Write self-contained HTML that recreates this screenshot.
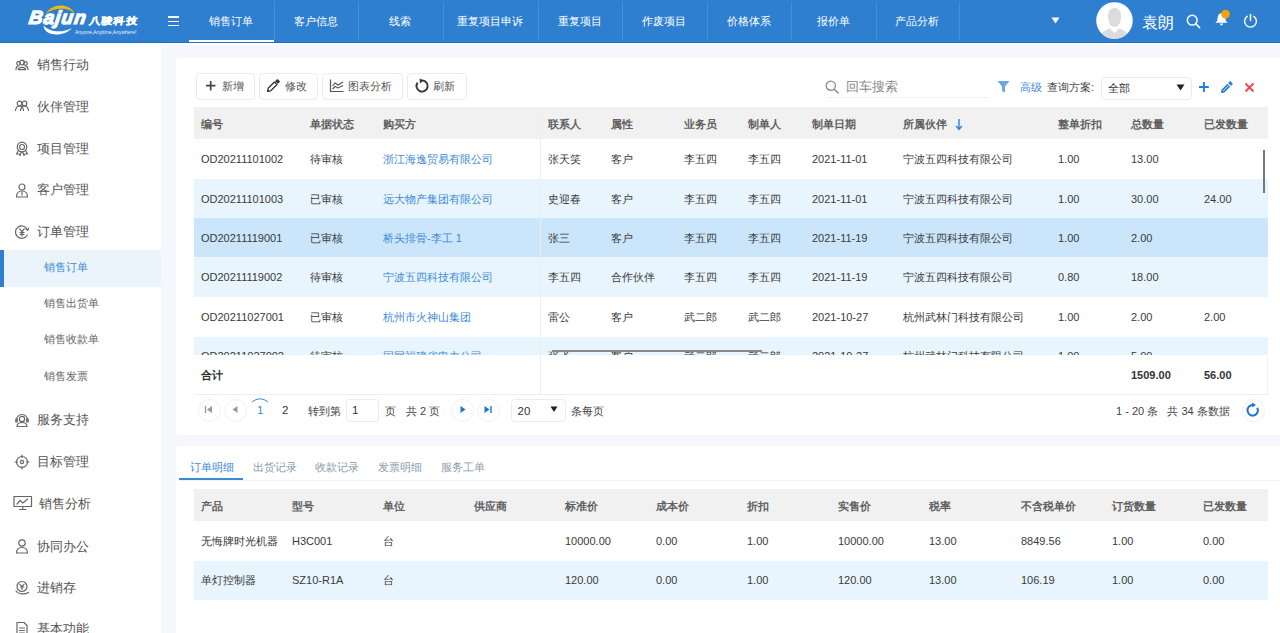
<!DOCTYPE html><html><head><meta charset="utf-8"><style>
html,body{margin:0;padding:0;width:1280px;height:633px;overflow:hidden;background:#fff;font-family:"Liberation Sans", sans-serif;}
.t{position:absolute;line-height:20px;white-space:nowrap;}
.r{position:absolute;}
</style></head><body>
<div class="r" style="left:161px;top:45px;width:1119px;height:588px;background:#f5f7fc;"></div>
<div class="r" style="left:176px;top:58px;width:1104px;height:376.5px;background:#fff;border-radius:3px 0 0 3px"></div>
<div class="r" style="left:176px;top:446px;width:1104px;height:187px;background:#fff;border-radius:3px 0 0 0"></div>
<div class="r" style="left:0px;top:0px;width:1280px;height:42px;background:#2f7fd1;"></div>
<div class="r" style="left:0px;top:42px;width:1280px;height:1px;background:#1c6fca;"></div>
<svg class="r" style="left:20px;top:0px" width="125" height="42" viewBox="0 0 125 42">
<path d="M26,13.8 C31,3.5 49,2 55,13.8 C50,7.5 34,6.5 26,13.8 Z" fill="#f5b800"/>
<path d="M23.5,25.5 C24,36.5 44,37.5 52,28 C42,33.5 29,32 23.5,25.5 Z" fill="#fff"/>
</svg>
<div class="t" style="left:27px;top:3px;font-size:19px;line-height:30px;font-weight:bold;font-style:italic;color:#fff;letter-spacing:1px;-webkit-text-stroke:1.2px #fff;transform:skewX(-8deg);transform-origin:0 30px">Bajun</div>
<div class="t" style="left:89px;top:10.5px;font-size:11px;font-weight:bold;color:#fff;letter-spacing:1.4px;-webkit-text-stroke:0.5px #fff;transform:skewX(-8deg) scaleY(0.86);transform-origin:0 10px">八骏科技</div>
<div class="t" style="left:75px;top:27px;font-size:5px;line-height:10px;color:#fff;opacity:0.9">Anyone,Anytime,Anywhere!</div>
<div class="r" style="left:168px;top:16.3px;width:11px;height:1.5px;background:#fff;"></div>
<div class="r" style="left:168px;top:20.6px;width:11px;height:1.5px;background:#fff;"></div>
<div class="r" style="left:168px;top:24.9px;width:11px;height:1.5px;background:#fff;"></div>
<div class="t" style="left:189px;width:84.5px;text-align:center;top:11.2px;font-size:11px;color:#fff;font-weight:normal;">销售订单</div>
<div class="r" style="left:273.5px;top:2px;width:1px;height:38px;background:rgba(255,255,255,0.13);"></div>
<div class="t" style="left:273.5px;width:84.5px;text-align:center;top:11.2px;font-size:11px;color:#fff;font-weight:normal;">客户信息</div>
<div class="r" style="left:358px;top:2px;width:1px;height:38px;background:rgba(255,255,255,0.13);"></div>
<div class="t" style="left:358px;width:84.5px;text-align:center;top:11.2px;font-size:11px;color:#fff;font-weight:normal;">线索</div>
<div class="r" style="left:442.5px;top:2px;width:1px;height:38px;background:rgba(255,255,255,0.13);"></div>
<div class="t" style="left:442.5px;width:95.0px;text-align:center;top:11.2px;font-size:11px;color:#fff;font-weight:normal;">重复项目申诉</div>
<div class="r" style="left:537.5px;top:2px;width:1px;height:38px;background:rgba(255,255,255,0.13);"></div>
<div class="t" style="left:537.5px;width:84.5px;text-align:center;top:11.2px;font-size:11px;color:#fff;font-weight:normal;">重复项目</div>
<div class="r" style="left:622px;top:2px;width:1px;height:38px;background:rgba(255,255,255,0.13);"></div>
<div class="t" style="left:622px;width:84.5px;text-align:center;top:11.2px;font-size:11px;color:#fff;font-weight:normal;">作废项目</div>
<div class="r" style="left:706.5px;top:2px;width:1px;height:38px;background:rgba(255,255,255,0.13);"></div>
<div class="t" style="left:706.5px;width:84.5px;text-align:center;top:11.2px;font-size:11px;color:#fff;font-weight:normal;">价格体系</div>
<div class="r" style="left:791px;top:2px;width:1px;height:38px;background:rgba(255,255,255,0.13);"></div>
<div class="t" style="left:791px;width:84.5px;text-align:center;top:11.2px;font-size:11px;color:#fff;font-weight:normal;">报价单</div>
<div class="r" style="left:875.5px;top:2px;width:1px;height:38px;background:rgba(255,255,255,0.13);"></div>
<div class="t" style="left:875.5px;width:83.5px;text-align:center;top:11.2px;font-size:11px;color:#fff;font-weight:normal;">产品分析</div>
<div class="r" style="left:959px;top:2px;width:1px;height:38px;background:rgba(255,255,255,0.13);"></div>
<div class="r" style="left:189px;top:40px;width:84.5px;height:2.2px;background:#fff;"></div>
<svg class="r" style="left:1051px;top:17px;" width="9" height="7" viewBox="0 0 9 7"><path d="M0.5,0.5 L8.5,0.5 L4.5,6.5 Z" fill="#fff"/></svg>
<svg class="r" style="left:1096px;top:2px" width="37" height="37" viewBox="0 0 37 37">
<defs><clipPath id="cc"><circle cx="18.5" cy="18.5" r="18.3"/></clipPath></defs>
<circle cx="18.5" cy="18.5" r="18.3" fill="#fff"/>
<g clip-path="url(#cc)" fill="#dcdcdf">
<path d="M18.5,6 C13.5,6 12,10 12,15 C12,20 14.5,25 18.5,25 C22.5,25 25,20 25,15 C25,10 23.5,6 18.5,6 Z"/>
<path d="M4,37 C5,30 9,28 14,26.5 L18.5,31 L23,26.5 C28,28 32,30 33,37 Z"/>
</g></svg>
<div class="t" style="left:1142px;top:12.5px;font-size:16px;color:#fff;font-weight:normal;">袁朗</div>
<svg class="r" style="left:1186px;top:14px;" width="15" height="15" viewBox="0 0 15 15"><circle cx="6.2" cy="6.2" r="4.9" stroke="#fff" stroke-width="1.5" fill="none"/><path d="M9.8,9.8 L13.6,13.6" stroke="#fff" stroke-width="1.6" stroke-linecap="round"/></svg>
<svg class="r" style="left:1213px;top:9px;" width="20" height="20" viewBox="0 0 20 20"><path d="M2.3,13.8 C3.6,12.8 4.6,12 4.6,9 C4.6,6 6.5,4.3 8.5,4.3 C10.5,4.3 12.4,6 12.4,9 C12.4,12 13.4,12.8 14.7,13.8 Z" fill="#fff"/><path d="M7,14.6 L10,14.6 L9.6,16.2 L7.4,16.2 Z" fill="#fff"/><circle cx="12.5" cy="5.1" r="4.3" fill="#f8a200"/></svg>
<svg class="r" style="left:1242px;top:12px;" width="17" height="17" viewBox="0 0 17 17"><path d="M5.2,4.3 A5.9,5.9 0 1 0 11.8,4.3" stroke="#fff" stroke-width="1.4" fill="none" stroke-linecap="round"/><path d="M8.5,2.6 L8.5,8.4" stroke="#fff" stroke-width="1.5" stroke-linecap="round"/></svg>
<div class="t" style="left:37px;top:55.2px;font-size:13px;color:#555;font-weight:normal;">销售行动</div>
<div class="t" style="left:37px;top:97px;font-size:13px;color:#555;font-weight:normal;">伙伴管理</div>
<div class="t" style="left:37px;top:138.7px;font-size:13px;color:#555;font-weight:normal;">项目管理</div>
<div class="t" style="left:37px;top:180px;font-size:13px;color:#555;font-weight:normal;">客户管理</div>
<div class="t" style="left:37px;top:221.5px;font-size:13px;color:#555;font-weight:normal;">订单管理</div>
<div class="t" style="left:37px;top:410px;font-size:13px;color:#555;font-weight:normal;">服务支持</div>
<div class="t" style="left:37px;top:452px;font-size:13px;color:#555;font-weight:normal;">目标管理</div>
<div class="t" style="left:39px;top:493.8px;font-size:13px;color:#555;font-weight:normal;">销售分析</div>
<div class="t" style="left:37px;top:536.5px;font-size:13px;color:#555;font-weight:normal;">协同办公</div>
<div class="t" style="left:37px;top:578px;font-size:13px;color:#555;font-weight:normal;">进销存</div>
<div class="t" style="left:37px;top:619px;font-size:13px;color:#555;font-weight:normal;">基本功能</div>
<svg class="r" style="left:14px;top:57px;" width="16" height="16" viewBox="0 0 16 16"><circle cx="8" cy="5.5" r="2.3" stroke="#666" stroke-width="1.2" fill="none" stroke-linecap="round" stroke-linejoin="round"/><circle cx="4.5" cy="6.5" r="1.8" stroke="#666" stroke-width="1.2" fill="none" stroke-linecap="round" stroke-linejoin="round"/><circle cx="11.5" cy="6.5" r="1.8" stroke="#666" stroke-width="1.2" fill="none" stroke-linecap="round" stroke-linejoin="round"/><path d="M4.3,12.6 C4.3,9.5 11.7,9.5 11.7,12.6 Z" stroke="#666" stroke-width="1.2" fill="none" stroke-linecap="round" stroke-linejoin="round"/><path d="M2,12.6 C2,10 3,9.3 4,9.3 M14,12.6 C14,10 13,9.3 12,9.3" stroke="#666" stroke-width="1.2" fill="none" stroke-linecap="round" stroke-linejoin="round"/></svg>
<svg class="r" style="left:14px;top:99px;" width="16" height="16" viewBox="0 0 16 16"><circle cx="5.5" cy="4.5" r="2.3" stroke="#666" stroke-width="1.2" fill="none" stroke-linecap="round" stroke-linejoin="round"/><circle cx="10.5" cy="4.5" r="2.3" stroke="#666" stroke-width="1.2" fill="none" stroke-linecap="round" stroke-linejoin="round"/><path d="M1.5,11.5 C2,8 4,7 5.5,7 C7,7 9,8 9.5,11.5" stroke="#666" stroke-width="1.2" fill="none" stroke-linecap="round" stroke-linejoin="round"/><path d="M6.5,11.5 C7,8 9,7 10.5,7 C12,7 14,8 14.5,11.5" stroke="#666" stroke-width="1.2" fill="none" stroke-linecap="round" stroke-linejoin="round"/></svg>
<svg class="r" style="left:14px;top:141px;" width="16" height="16" viewBox="0 0 16 16"><circle cx="8" cy="6" r="4.8" stroke="#666" stroke-width="1.2" fill="none" stroke-linecap="round" stroke-linejoin="round"/><circle cx="8" cy="6" r="2.5" stroke="#666" stroke-width="1.2" fill="none" stroke-linecap="round" stroke-linejoin="round"/><path d="M4.5,9.5 L2.5,13 L5,13 L6,14.5 L7.3,11 M11.5,9.5 L13.5,13 L11,13 L10,14.5 L8.7,11" stroke="#666" stroke-width="1.2" fill="none" stroke-linecap="round" stroke-linejoin="round"/></svg>
<svg class="r" style="left:14px;top:182px;" width="16" height="16" viewBox="0 0 16 16"><circle cx="8" cy="5" r="3" stroke="#666" stroke-width="1.2" fill="none" stroke-linecap="round" stroke-linejoin="round"/><path d="M2.5,15 C2.5,11 4.5,9 8,9 C11.5,9 13.5,11 13.5,15 Z" stroke="#666" stroke-width="1.2" fill="none" stroke-linecap="round" stroke-linejoin="round"/><path d="M8,10 L8,13" stroke="#666" stroke-width="1.2" fill="none" stroke-linecap="round" stroke-linejoin="round"/></svg>
<svg class="r" style="left:14px;top:224px;" width="16" height="16" viewBox="0 0 16 16"><path d="M13.5,6 A6.2,6.2 0 1 0 13.2,11" stroke="#666" stroke-width="1.2" fill="none" stroke-linecap="round" stroke-linejoin="round"/><path d="M12,5 L13.8,6.3 L14.6,4.2" stroke="#666" stroke-width="1.2" fill="none" stroke-linecap="round" stroke-linejoin="round"/><path d="M5.8,4.8 L8,7.8 L10.2,4.8 M8,7.8 L8,12 M6,8.5 L10,8.5 M6,10.3 L10,10.3" stroke="#666" stroke-width="1.2" fill="none" stroke-linecap="round" stroke-linejoin="round"/></svg>
<svg class="r" style="left:14px;top:412px;" width="16" height="16" viewBox="0 0 16 16"><circle cx="8" cy="7" r="2.6" stroke="#666" stroke-width="1.2" fill="none" stroke-linecap="round" stroke-linejoin="round"/><path d="M2.5,8 A5.5,5.5 0 0 1 13.5,8" stroke="#666" stroke-width="1.2" fill="none" stroke-linecap="round" stroke-linejoin="round"/><path d="M3,14.5 C3,11.5 5,10.5 8,10.5 C11,10.5 13,11.5 13,14.5 Z" stroke="#666" stroke-width="1.2" fill="none" stroke-linecap="round" stroke-linejoin="round"/><rect x="1.8" y="7" width="1.5" height="3" stroke="#666" stroke-width="1.2" fill="none" stroke-linecap="round" stroke-linejoin="round"/><rect x="12.7" y="7" width="1.5" height="3" stroke="#666" stroke-width="1.2" fill="none" stroke-linecap="round" stroke-linejoin="round"/></svg>
<svg class="r" style="left:14px;top:454px;" width="16" height="16" viewBox="0 0 16 16"><circle cx="8" cy="8" r="5.5" stroke="#666" stroke-width="1.2" fill="none" stroke-linecap="round" stroke-linejoin="round"/><circle cx="8" cy="8" r="1.6" stroke="#666" stroke-width="1.2" fill="none" stroke-linecap="round" stroke-linejoin="round"/><path d="M8,1 L8,3.5 M8,12.5 L8,15 M1,8 L3.5,8 M12.5,8 L15,8" stroke="#666" stroke-width="1.2" fill="none" stroke-linecap="round" stroke-linejoin="round"/></svg>
<svg class="r" style="left:13px;top:495px;" width="20" height="16" viewBox="0 0 20 16"><rect x="1" y="1.5" width="17.5" height="10" stroke="#666" stroke-width="1.2" fill="none" stroke-linecap="round" stroke-linejoin="round"/><path d="M4,9 L7,5.5 L10,8 L14.5,4" stroke="#666" stroke-width="1.2" fill="none" stroke-linecap="round" stroke-linejoin="round"/><path d="M9.75,11.5 L9.75,14.5 M6.5,14.5 L13,14.5" stroke="#666" stroke-width="1.2" fill="none" stroke-linecap="round" stroke-linejoin="round"/></svg>
<svg class="r" style="left:14px;top:538px;" width="16" height="16" viewBox="0 0 16 16"><circle cx="8" cy="5" r="3.2" stroke="#666" stroke-width="1.2" fill="none" stroke-linecap="round" stroke-linejoin="round"/><path d="M2.5,15 C2.5,11 5,9.5 8,9.5 C11,9.5 13.5,11 13.5,15 Z" stroke="#666" stroke-width="1.2" fill="none" stroke-linecap="round" stroke-linejoin="round"/></svg>
<svg class="r" style="left:14px;top:580px;" width="16" height="16" viewBox="0 0 16 16"><circle cx="8" cy="6.5" r="5" stroke="#666" stroke-width="1.2" fill="none" stroke-linecap="round" stroke-linejoin="round"/><path d="M6,4.3 L8,6.6 L10,4.3 M8,6.6 L8,9.5 M6.3,7 L9.7,7" stroke="#666" stroke-width="1.2" fill="none" stroke-linecap="round" stroke-linejoin="round"/><path d="M2,11 C4,14 10,15 14.5,12.5" stroke="#666" stroke-width="1.2" fill="none" stroke-linecap="round" stroke-linejoin="round"/></svg>
<svg class="r" style="left:14px;top:621px;" width="16" height="16" viewBox="0 0 16 16"><path d="M3,1.5 L10,1.5 L13,4.5 L13,15 L3,15 Z" stroke="#666" stroke-width="1.2" fill="none" stroke-linecap="round" stroke-linejoin="round"/><path d="M5.5,7 L10.5,7 M5.5,9.5 L10.5,9.5 M5.5,12 L10.5,12" stroke="#666" stroke-width="1.2" fill="none" stroke-linecap="round" stroke-linejoin="round"/></svg>
<div class="r" style="left:0px;top:250px;width:161px;height:36.5px;background:#ebf3fb;"></div>
<div class="r" style="left:0px;top:250px;width:4px;height:36.5px;background:#2f7fd1;"></div>
<div class="t" style="left:44px;top:256.5px;font-size:11.2px;color:#3a8ad8;font-weight:normal;">销售订单</div>
<div class="t" style="left:44px;top:292.8px;font-size:11.2px;color:#666;font-weight:normal;">销售出货单</div>
<div class="t" style="left:44px;top:329.4px;font-size:11.2px;color:#666;font-weight:normal;">销售收款单</div>
<div class="t" style="left:44px;top:365.5px;font-size:11.2px;color:#666;font-weight:normal;">销售发票</div>
<div class="r" style="left:196px;top:73px;width:56.5px;height:25px;border:1px solid #ebebeb;border-radius:4px;background:#fff"></div>
<svg class="r" style="left:205px;top:80px" width="12" height="12" viewBox="0 0 12 12"><path d="M5.7,1 L5.7,10.5 M1,5.7 L10.5,5.7" stroke="#444" stroke-width="1.7"/></svg>
<div class="t" style="left:221.5px;top:76px;font-size:11px;color:#555;font-weight:normal;">新增</div>
<div class="r" style="left:259px;top:73px;width:57px;height:25px;border:1px solid #ebebeb;border-radius:4px;background:#fff"></div>
<svg class="r" style="left:264px;top:78px" width="17" height="16" viewBox="0 0 17 16"><g transform="translate(3.6,13.4) rotate(-45)"><path d="M0,0 L2.6,-1.8 L11.5,-1.8 L11.5,1.8 L2.6,1.8 Z" stroke="#333" stroke-width="1.3" fill="#fff" stroke-linejoin="round"/><path d="M0,0 L1.6,-1.1 L1.6,1.1 Z" fill="#333"/><rect x="12.6" y="-2" width="3.2" height="4" rx="0.8" fill="#333"/></g></svg>
<div class="t" style="left:284.5px;top:76px;font-size:11px;color:#555;font-weight:normal;">修改</div>
<div class="r" style="left:322px;top:73px;width:79px;height:25px;border:1px solid #ebebeb;border-radius:4px;background:#fff"></div>
<svg class="r" style="left:329px;top:78px" width="16" height="15" viewBox="0 0 16 15"><path d="M1.5,1.5 L1.5,13.5 L14.5,13.5" stroke="#555" stroke-width="1.2" fill="none"/><path d="M3.5,8 L6,5 L9,7 L14,4 M3.5,11 L6,8.5 L9,10 L14,7.5" stroke="#555" stroke-width="1.1" fill="none"/></svg>
<div class="t" style="left:348px;top:76px;font-size:11px;color:#555;font-weight:normal;">图表分析</div>
<div class="r" style="left:407px;top:73px;width:57.5px;height:25px;border:1px solid #ebebeb;border-radius:4px;background:#fff"></div>
<svg class="r" style="left:414px;top:78px" width="16" height="16" viewBox="0 0 16 16"><path d="M3.6,4.6 A5.6,5.6 0 1 0 7.8,2.4" stroke="#333" stroke-width="1.9" fill="none"/><path d="M5.6,0.4 L9.6,2.6 L6,5.6 Z" fill="#333"/></svg>
<div class="t" style="left:433px;top:76px;font-size:11px;color:#555;font-weight:normal;">刷新</div>
<svg class="r" style="left:825px;top:80px;" width="15" height="14" viewBox="0 0 15 14"><circle cx="5.8" cy="5.8" r="4.6" stroke="#888" stroke-width="1.3" fill="none"/><path d="M9.2,9.2 L13.2,13" stroke="#888" stroke-width="1.5" stroke-linecap="round"/></svg>
<div class="t" style="left:846px;top:77.2px;font-size:12.5px;color:#888;font-weight:normal;">回车搜索</div>
<div class="r" style="left:826px;top:97px;width:164px;height:1px;background:#f0f0f0;"></div>
<svg class="r" style="left:997px;top:80px;" width="13" height="14" viewBox="0 0 13 14"><path d="M0.5,1 L12.5,1 L8,6.5 L8,12.5 L5,11 L5,6.5 Z" fill="#6fa8e0"/></svg>
<div class="t" style="left:1019.5px;top:77px;font-size:11px;color:#3d8ad6;font-weight:normal;">高级</div>
<div class="t" style="left:1047px;top:77px;font-size:11px;color:#444;font-weight:normal;">查询方案:</div>
<div class="r" style="left:1101px;top:77px;width:89px;height:21px;border:1px solid #ebebeb;border-radius:4px;background:#fff"></div>
<div class="t" style="left:1108px;top:78px;font-size:11px;color:#333;font-weight:normal;">全部</div>
<svg class="r" style="left:1176px;top:84px;" width="9" height="7" viewBox="0 0 9 7"><path d="M0.5,0.5 L8.5,0.5 L4.5,6.5 Z" fill="#222"/></svg>
<svg class="r" style="left:1198px;top:81px;" width="12" height="12" viewBox="0 0 12 12"><path d="M5.9,1 L5.9,11 M1,6 L10.8,6" stroke="#1f7de0" stroke-width="1.9"/></svg>
<svg class="r" style="left:1219px;top:80px;" width="15" height="15" viewBox="0 0 15 15"><g transform="translate(2,13) rotate(-45)"><path d="M0,0 L2.4,-2 L11,-2 L11,2 L2.4,2 Z" fill="#2a82dc"/><path d="M3,0 L10.5,0" stroke="#cfe3f7" stroke-width="0.9"/><rect x="12" y="-2.1" width="3" height="4.2" rx="1" fill="#2a82dc"/></g></svg>
<svg class="r" style="left:1244px;top:82px;" width="11" height="11" viewBox="0 0 11 11"><path d="M1.5,1.5 L9.5,9.5 M9.5,1.5 L1.5,9.5" stroke="#f04848" stroke-width="1.9"/></svg>
<div class="r" style="left:194px;top:107px;width:1074px;height:32px;background:#f1f1f1;"></div>
<div class="r" style="left:194px;top:139px;width:1074px;height:216px;overflow:hidden">
<div class="r" style="left:0;top:0px;width:1074px;height:39.5px;background:#ffffff"></div>
<div class="t" style="left:7px;top:9.7px;font-size:11px;color:#3a3a3a">OD20211101002</div>
<div class="t" style="left:116px;top:9.7px;font-size:11px;color:#3a3a3a">待审核</div>
<div class="t" style="left:189px;top:9.7px;font-size:11px;color:#3d8ad6">浙江海逸贸易有限公司</div>
<div class="t" style="left:353.5px;top:9.7px;font-size:11px;color:#3a3a3a">张天笑</div>
<div class="t" style="left:417px;top:9.7px;font-size:11px;color:#3a3a3a">客户</div>
<div class="t" style="left:490px;top:9.7px;font-size:11px;color:#3a3a3a">李五四</div>
<div class="t" style="left:554px;top:9.7px;font-size:11px;color:#3a3a3a">李五四</div>
<div class="t" style="left:618px;top:9.7px;font-size:11px;color:#3a3a3a">2021-11-01</div>
<div class="t" style="left:709px;top:9.7px;font-size:11px;color:#3a3a3a">宁波五四科技有限公司</div>
<div class="t" style="left:864px;top:9.7px;font-size:11px;color:#3a3a3a">1.00</div>
<div class="t" style="left:937px;top:9.7px;font-size:11px;color:#3a3a3a">13.00</div>
<div class="t" style="left:1010px;top:9.7px;font-size:11px;color:#3a3a3a"></div>
<div class="r" style="left:0;top:40px;width:1074px;height:39.5px;background:#e8f5fe"></div>
<div class="t" style="left:7px;top:49.7px;font-size:11px;color:#3a3a3a">OD20211101003</div>
<div class="t" style="left:116px;top:49.7px;font-size:11px;color:#3a3a3a">已审核</div>
<div class="t" style="left:189px;top:49.7px;font-size:11px;color:#3d8ad6">远大物产集团有限公司</div>
<div class="t" style="left:353.5px;top:49.7px;font-size:11px;color:#3a3a3a">史迎春</div>
<div class="t" style="left:417px;top:49.7px;font-size:11px;color:#3a3a3a">客户</div>
<div class="t" style="left:490px;top:49.7px;font-size:11px;color:#3a3a3a">李五四</div>
<div class="t" style="left:554px;top:49.7px;font-size:11px;color:#3a3a3a">李五四</div>
<div class="t" style="left:618px;top:49.7px;font-size:11px;color:#3a3a3a">2021-11-01</div>
<div class="t" style="left:709px;top:49.7px;font-size:11px;color:#3a3a3a">宁波五四科技有限公司</div>
<div class="t" style="left:864px;top:49.7px;font-size:11px;color:#3a3a3a">1.00</div>
<div class="t" style="left:937px;top:49.7px;font-size:11px;color:#3a3a3a">30.00</div>
<div class="t" style="left:1010px;top:49.7px;font-size:11px;color:#3a3a3a">24.00</div>
<div class="r" style="left:0;top:79px;width:1074px;height:39.5px;background:#cbe5fa"></div>
<div class="t" style="left:7px;top:88.7px;font-size:11px;color:#3a3a3a">OD20211119001</div>
<div class="t" style="left:116px;top:88.7px;font-size:11px;color:#3a3a3a">已审核</div>
<div class="t" style="left:189px;top:88.7px;font-size:11px;color:#3d8ad6">桥头排骨-李工 1</div>
<div class="t" style="left:353.5px;top:88.7px;font-size:11px;color:#3a3a3a">张三</div>
<div class="t" style="left:417px;top:88.7px;font-size:11px;color:#3a3a3a">客户</div>
<div class="t" style="left:490px;top:88.7px;font-size:11px;color:#3a3a3a">李五四</div>
<div class="t" style="left:554px;top:88.7px;font-size:11px;color:#3a3a3a">李五四</div>
<div class="t" style="left:618px;top:88.7px;font-size:11px;color:#3a3a3a">2021-11-19</div>
<div class="t" style="left:709px;top:88.7px;font-size:11px;color:#3a3a3a">宁波五四科技有限公司</div>
<div class="t" style="left:864px;top:88.7px;font-size:11px;color:#3a3a3a">1.00</div>
<div class="t" style="left:937px;top:88.7px;font-size:11px;color:#3a3a3a">2.00</div>
<div class="t" style="left:1010px;top:88.7px;font-size:11px;color:#3a3a3a"></div>
<div class="r" style="left:0;top:118.30000000000001px;width:1074px;height:39.5px;background:#e8f5fe"></div>
<div class="t" style="left:7px;top:128.0px;font-size:11px;color:#3a3a3a">OD20211119002</div>
<div class="t" style="left:116px;top:128.0px;font-size:11px;color:#3a3a3a">待审核</div>
<div class="t" style="left:189px;top:128.0px;font-size:11px;color:#3d8ad6">宁波五四科技有限公司</div>
<div class="t" style="left:353.5px;top:128.0px;font-size:11px;color:#3a3a3a">李五四</div>
<div class="t" style="left:417px;top:128.0px;font-size:11px;color:#3a3a3a">合作伙伴</div>
<div class="t" style="left:490px;top:128.0px;font-size:11px;color:#3a3a3a">李五四</div>
<div class="t" style="left:554px;top:128.0px;font-size:11px;color:#3a3a3a">李五四</div>
<div class="t" style="left:618px;top:128.0px;font-size:11px;color:#3a3a3a">2021-11-19</div>
<div class="t" style="left:709px;top:128.0px;font-size:11px;color:#3a3a3a">宁波五四科技有限公司</div>
<div class="t" style="left:864px;top:128.0px;font-size:11px;color:#3a3a3a">0.80</div>
<div class="t" style="left:937px;top:128.0px;font-size:11px;color:#3a3a3a">18.00</div>
<div class="t" style="left:1010px;top:128.0px;font-size:11px;color:#3a3a3a"></div>
<div class="r" style="left:0;top:157.8px;width:1074px;height:39.5px;background:#ffffff"></div>
<div class="t" style="left:7px;top:167.5px;font-size:11px;color:#3a3a3a">OD20211027001</div>
<div class="t" style="left:116px;top:167.5px;font-size:11px;color:#3a3a3a">已审核</div>
<div class="t" style="left:189px;top:167.5px;font-size:11px;color:#3d8ad6">杭州市火神山集团</div>
<div class="t" style="left:353.5px;top:167.5px;font-size:11px;color:#3a3a3a">雷公</div>
<div class="t" style="left:417px;top:167.5px;font-size:11px;color:#3a3a3a">客户</div>
<div class="t" style="left:490px;top:167.5px;font-size:11px;color:#3a3a3a">武二郎</div>
<div class="t" style="left:554px;top:167.5px;font-size:11px;color:#3a3a3a">武二郎</div>
<div class="t" style="left:618px;top:167.5px;font-size:11px;color:#3a3a3a">2021-10-27</div>
<div class="t" style="left:709px;top:167.5px;font-size:11px;color:#3a3a3a">杭州武林门科技有限公司</div>
<div class="t" style="left:864px;top:167.5px;font-size:11px;color:#3a3a3a">1.00</div>
<div class="t" style="left:937px;top:167.5px;font-size:11px;color:#3a3a3a">2.00</div>
<div class="t" style="left:1010px;top:167.5px;font-size:11px;color:#3a3a3a">2.00</div>
<div class="r" style="left:0;top:197.5px;width:1074px;height:39.5px;background:#e8f5fe"></div>
<div class="t" style="left:7px;top:207.2px;font-size:11px;color:#3a3a3a">OD20211027002</div>
<div class="t" style="left:116px;top:207.2px;font-size:11px;color:#3a3a3a">待审核</div>
<div class="t" style="left:189px;top:207.2px;font-size:11px;color:#3d8ad6">国网福建省电力公司</div>
<div class="t" style="left:353.5px;top:207.2px;font-size:11px;color:#3a3a3a">张飞</div>
<div class="t" style="left:417px;top:207.2px;font-size:11px;color:#3a3a3a">客户</div>
<div class="t" style="left:490px;top:207.2px;font-size:11px;color:#3a3a3a">武二郎</div>
<div class="t" style="left:554px;top:207.2px;font-size:11px;color:#3a3a3a">武二郎</div>
<div class="t" style="left:618px;top:207.2px;font-size:11px;color:#3a3a3a">2021-10-27</div>
<div class="t" style="left:709px;top:207.2px;font-size:11px;color:#3a3a3a">杭州武林门科技有限公司</div>
<div class="t" style="left:864px;top:207.2px;font-size:11px;color:#3a3a3a">1.00</div>
<div class="t" style="left:937px;top:207.2px;font-size:11px;color:#3a3a3a">5.00</div>
<div class="t" style="left:1010px;top:207.2px;font-size:11px;color:#3a3a3a"></div>
<div class="r" style="left:358px;top:211px;width:210px;height:2px;background:#888"></div>
</div>
<div class="t" style="left:201px;top:114px;font-size:11px;color:#606060;font-weight:bold;">编号</div>
<div class="t" style="left:310px;top:114px;font-size:11px;color:#606060;font-weight:bold;">单据状态</div>
<div class="t" style="left:383px;top:114px;font-size:11px;color:#606060;font-weight:bold;">购买方</div>
<div class="t" style="left:547.5px;top:114px;font-size:11px;color:#606060;font-weight:bold;">联系人</div>
<div class="t" style="left:611px;top:114px;font-size:11px;color:#606060;font-weight:bold;">属性</div>
<div class="t" style="left:684px;top:114px;font-size:11px;color:#606060;font-weight:bold;">业务员</div>
<div class="t" style="left:748px;top:114px;font-size:11px;color:#606060;font-weight:bold;">制单人</div>
<div class="t" style="left:812px;top:114px;font-size:11px;color:#606060;font-weight:bold;">制单日期</div>
<div class="t" style="left:903px;top:114px;font-size:11px;color:#606060;font-weight:bold;">所属伙伴</div>
<div class="t" style="left:1058px;top:114px;font-size:11px;color:#606060;font-weight:bold;">整单折扣</div>
<div class="t" style="left:1131px;top:114px;font-size:11px;color:#606060;font-weight:bold;">总数量</div>
<div class="t" style="left:1204px;top:114px;font-size:11px;color:#606060;font-weight:bold;">已发数量</div>
<svg class="r" style="left:955px;top:118px;" width="8" height="13" viewBox="0 0 8 13"><path d="M4,1 L4,11 M1.2,8 L4,11.5 L6.8,8" stroke="#2a82dc" stroke-width="1.4" fill="none"/></svg>
<div class="r" style="left:540px;top:107px;width:1px;height:287px;background:#eeeeee;"></div>
<div class="r" style="left:1263px;top:150px;width:2px;height:43px;background:#777;"></div>
<div class="t" style="left:201px;top:365px;font-size:11px;color:#333;font-weight:bold;">合计</div>
<div class="t" style="left:1131px;top:365px;font-size:11px;color:#333;font-weight:bold;">1509.00</div>
<div class="t" style="left:1204px;top:365px;font-size:11px;color:#333;font-weight:bold;">56.00</div>
<div class="r" style="left:194px;top:394px;width:1074px;height:1px;background:#eeeeee;"></div>
<div class="r" style="left:1267px;top:355px;width:1px;height:39px;background:#f0f0f0;"></div>
<div class="r" style="left:198.0px;top:399.0px;width:21px;height:21px;border:1px solid #eef2f6;border-radius:50%"></div>
<svg class="r" style="left:204px;top:405px" width="10" height="9" viewBox="0 0 10 9"><path d="M1.5,1 L1.5,8" stroke="#999" stroke-width="1.4"/><path d="M8,1 L8,8 L3,4.5 Z" fill="#999"/></svg>
<div class="r" style="left:223.5px;top:399.0px;width:21px;height:21px;border:1px solid #eef2f6;border-radius:50%"></div>
<svg class="r" style="left:231px;top:405px" width="8" height="9" viewBox="0 0 8 9"><path d="M6.5,1 L6.5,8 L1.5,4.5 Z" fill="#999"/></svg>
<svg class="r" style="left:251px;top:397px;" width="18" height="6" viewBox="0 0 18 6"><path d="M1,5 Q9,-1.5 17,5" stroke="#3a8ad8" stroke-width="1" fill="none"/></svg>
<div class="t" style="left:257px;top:399.5px;font-size:11.5px;color:#3a8ad8;font-weight:normal;">1</div>
<div class="t" style="left:282px;top:399.7px;font-size:11.5px;color:#333;font-weight:normal;">2</div>
<div class="t" style="left:307.5px;top:400.5px;font-size:11px;color:#444;font-weight:normal;">转到第</div>
<div class="r" style="left:346px;top:399px;width:31px;height:21px;border:1px solid #ececec;border-radius:3px"></div>
<div class="t" style="left:352px;top:399.5px;font-size:11.5px;color:#333;font-weight:normal;">1</div>
<div class="t" style="left:384.5px;top:400.5px;font-size:11px;color:#444;font-weight:normal;">页</div>
<div class="t" style="left:406px;top:400.5px;font-size:11px;color:#444;font-weight:normal;">共 2 页</div>
<div class="r" style="left:451.0px;top:399.0px;width:21px;height:21px;border:1px solid #eef2f6;border-radius:50%"></div>
<svg class="r" style="left:459px;top:405px" width="8" height="9" viewBox="0 0 8 9"><path d="M1.5,1 L1.5,8 L6.5,4.5 Z" fill="#1a78d0"/></svg>
<div class="r" style="left:476.5px;top:399.0px;width:21px;height:21px;border:1px solid #eef2f6;border-radius:50%"></div>
<svg class="r" style="left:483px;top:405px" width="10" height="9" viewBox="0 0 10 9"><path d="M1.5,1 L1.5,8 L6.5,4.5 Z" fill="#1a78d0"/><path d="M8,1 L8,8" stroke="#1a78d0" stroke-width="1.4"/></svg>
<div class="r" style="left:511px;top:399px;width:53px;height:21px;border:1px solid #ececec;border-radius:4px"></div>
<div class="t" style="left:517.5px;top:400.5px;font-size:11.5px;color:#333;font-weight:normal;">20</div>
<svg class="r" style="left:550px;top:406px;" width="8" height="7" viewBox="0 0 8 7"><path d="M0.5,0.5 L7.5,0.5 L4,6 Z" fill="#222"/></svg>
<div class="t" style="left:571px;top:400.5px;font-size:11px;color:#444;font-weight:normal;">条每页</div>
<div class="t" style="left:1116px;top:400.5px;font-size:11px;color:#444;font-weight:normal;">1 - 20 条 &nbsp; 共 34 条数据</div>
<div class="r" style="left:1241.5px;top:399.0px;width:21px;height:21px;border:1px solid #eef2f6;border-radius:50%"></div>
<svg class="r" style="left:1245px;top:402px" width="16" height="17" viewBox="0 0 16 17"><path d="M7.7,3.1 A5.2,5.2 0 1 0 12.2,5.7" stroke="#1a78d0" stroke-width="2" fill="none"/><path d="M7.2,0.6 L11,3.1 L7.2,5.6 Z" fill="#1a78d0"/></svg>
<div class="t" style="left:189.5px;top:456.5px;font-size:11px;color:#3a8ad8;font-weight:normal;">订单明细</div>
<div class="t" style="left:252.7px;top:456.5px;font-size:11px;color:#8a9aaa;font-weight:normal;">出货记录</div>
<div class="t" style="left:315.3px;top:456.5px;font-size:11px;color:#8a9aaa;font-weight:normal;">收款记录</div>
<div class="t" style="left:377.8px;top:456.5px;font-size:11px;color:#8a9aaa;font-weight:normal;">发票明细</div>
<div class="t" style="left:440.5px;top:456.5px;font-size:11px;color:#8a9aaa;font-weight:normal;">服务工单</div>
<div class="r" style="left:179px;top:479.5px;width:1101px;height:1px;background:#f2f2f2;"></div>
<div class="r" style="left:179px;top:478px;width:64px;height:2px;background:#3a8ad8;"></div>
<div class="r" style="left:194px;top:489px;width:1074px;height:32px;background:#f1f1f1;"></div>
<div class="r" style="left:194px;top:560.5px;width:1074px;height:39px;background:#e8f5fe;"></div>
<div class="t" style="left:201px;top:495.5px;font-size:11px;color:#606060;font-weight:bold;">产品</div>
<div class="t" style="left:292px;top:495.5px;font-size:11px;color:#606060;font-weight:bold;">型号</div>
<div class="t" style="left:383px;top:495.5px;font-size:11px;color:#606060;font-weight:bold;">单位</div>
<div class="t" style="left:474px;top:495.5px;font-size:11px;color:#606060;font-weight:bold;">供应商</div>
<div class="t" style="left:565px;top:495.5px;font-size:11px;color:#606060;font-weight:bold;">标准价</div>
<div class="t" style="left:656px;top:495.5px;font-size:11px;color:#606060;font-weight:bold;">成本价</div>
<div class="t" style="left:747px;top:495.5px;font-size:11px;color:#606060;font-weight:bold;">折扣</div>
<div class="t" style="left:838px;top:495.5px;font-size:11px;color:#606060;font-weight:bold;">实售价</div>
<div class="t" style="left:929px;top:495.5px;font-size:11px;color:#606060;font-weight:bold;">税率</div>
<div class="t" style="left:1021px;top:495.5px;font-size:11px;color:#606060;font-weight:bold;">不含税单价</div>
<div class="t" style="left:1112px;top:495.5px;font-size:11px;color:#606060;font-weight:bold;">订货数量</div>
<div class="t" style="left:1203px;top:495.5px;font-size:11px;color:#606060;font-weight:bold;">已发数量</div>
<div class="t" style="left:201px;top:530.5px;font-size:11px;color:#3a3a3a;font-weight:normal;">无悔牌时光机器</div>
<div class="t" style="left:292px;top:530.5px;font-size:11px;color:#3a3a3a;font-weight:normal;">H3C001</div>
<div class="t" style="left:383px;top:530.5px;font-size:11px;color:#3a3a3a;font-weight:normal;">台</div>
<div class="t" style="left:565px;top:530.5px;font-size:11px;color:#3a3a3a;font-weight:normal;">10000.00</div>
<div class="t" style="left:656px;top:530.5px;font-size:11px;color:#3a3a3a;font-weight:normal;">0.00</div>
<div class="t" style="left:747px;top:530.5px;font-size:11px;color:#3a3a3a;font-weight:normal;">1.00</div>
<div class="t" style="left:838px;top:530.5px;font-size:11px;color:#3a3a3a;font-weight:normal;">10000.00</div>
<div class="t" style="left:929px;top:530.5px;font-size:11px;color:#3a3a3a;font-weight:normal;">13.00</div>
<div class="t" style="left:1021px;top:530.5px;font-size:11px;color:#3a3a3a;font-weight:normal;">8849.56</div>
<div class="t" style="left:1112px;top:530.5px;font-size:11px;color:#3a3a3a;font-weight:normal;">1.00</div>
<div class="t" style="left:1203px;top:530.5px;font-size:11px;color:#3a3a3a;font-weight:normal;">0.00</div>
<div class="t" style="left:201px;top:569.8px;font-size:11px;color:#3a3a3a;font-weight:normal;">单灯控制器</div>
<div class="t" style="left:292px;top:569.8px;font-size:11px;color:#3a3a3a;font-weight:normal;">SZ10-R1A</div>
<div class="t" style="left:383px;top:569.8px;font-size:11px;color:#3a3a3a;font-weight:normal;">台</div>
<div class="t" style="left:565px;top:569.8px;font-size:11px;color:#3a3a3a;font-weight:normal;">120.00</div>
<div class="t" style="left:656px;top:569.8px;font-size:11px;color:#3a3a3a;font-weight:normal;">0.00</div>
<div class="t" style="left:747px;top:569.8px;font-size:11px;color:#3a3a3a;font-weight:normal;">1.00</div>
<div class="t" style="left:838px;top:569.8px;font-size:11px;color:#3a3a3a;font-weight:normal;">120.00</div>
<div class="t" style="left:929px;top:569.8px;font-size:11px;color:#3a3a3a;font-weight:normal;">13.00</div>
<div class="t" style="left:1021px;top:569.8px;font-size:11px;color:#3a3a3a;font-weight:normal;">106.19</div>
<div class="t" style="left:1112px;top:569.8px;font-size:11px;color:#3a3a3a;font-weight:normal;">1.00</div>
<div class="t" style="left:1203px;top:569.8px;font-size:11px;color:#3a3a3a;font-weight:normal;">0.00</div>
</body></html>
